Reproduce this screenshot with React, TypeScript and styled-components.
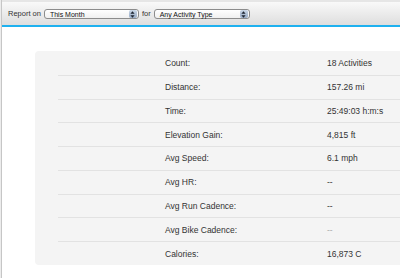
import React from 'react'
import styled, { createGlobalStyle } from 'styled-components'

const GlobalStyle = createGlobalStyle`
    html, body {
        margin: 0;
        padding: 0;
        background: #ececec;
        font-family: "Liberation Sans", Arial, sans-serif;
    }
`

const stats = [
    { label: 'Count:', value: '18 Activities' },
    { label: 'Distance:', value: '157.26 mi' },
    { label: 'Time:', value: '25:49:03 h:m:s' },
    { label: 'Elevation Gain:', value: '4,815 ft' },
    { label: 'Avg Speed:', value: '6.1 mph' },
    { label: 'Avg HR:', value: '--' },
    { label: 'Avg Run Cadence:', value: '--' },
    { label: 'Avg Bike Cadence:', value: '--', faint: true },
    { label: 'Calories:', value: '16,873 C' },
]

const SelectBox = ({ text, width }: { text: string; width: number }) => (
    <Select $width={width}>
        <span>{text}</span>
        <Stepper>
            <svg width="5" height="7" viewBox="0 0 5 7">
                <path d="M2.5 0.3 L4.6 2.8 L0.4 2.8 Z" fill="#1d2430" />
                <path d="M2.5 6.7 L4.6 4.2 L0.4 4.2 Z" fill="#1d2430" />
            </svg>
        </Stepper>
    </Select>
)

const App = () => {
    return (
        <Page>
            <GlobalStyle />
            <Toolbar>
                <ToolLabel>Report on</ToolLabel>
                <SelectBox text="This Month" width={95} />
                <ToolLabel>for</ToolLabel>
                <SelectBox text="Any Activity Type" width={96} />
            </Toolbar>
            <Content>
                <Panel>
                    <Table>
                        {stats.map((s) => (
                            <Row key={s.label}>
                                <Label>{s.label}</Label>
                                <Value $faint={s.faint}>{s.value}</Value>
                            </Row>
                        ))}
                    </Table>
                </Panel>
            </Content>
        </Page>
    )
}

const Page = styled.div`
    margin-left: 1px;
    border-left: 1px solid #c6c6c6;
    background: #fff;
    height: 278px;
    box-sizing: border-box;
`

const Toolbar = styled.div`
    height: 23px;
    border-top: 2px solid #e6e6e6;
    border-bottom: 2px solid #1fb1ef;
    background: linear-gradient(#f9f9f9, #dedede);
    display: flex;
    align-items: center;
    padding-left: 6px;
    gap: 3px;
`

const ToolLabel = styled.span`
    font-size: 7.5px;
    color: #333;
`

const Select = styled.div<{ $width: number }>`
    width: ${(p) => p.$width}px;
    height: 10px;
    box-sizing: border-box;
    border: 1px solid #8c8c8c;
    border-radius: 3px;
    background: linear-gradient(#ffffff, #f0f0f0);
    display: flex;
    align-items: center;
    justify-content: space-between;
    padding: 0 1px 0 5px;
    margin-top: 1px;
    font-size: 7px;
    color: #111;
`

const Stepper = styled.div`
    width: 8px;
    height: 8px;
    border-radius: 2px;
    background: linear-gradient(#c9d6e6, #97aac4);
    display: flex;
    align-items: center;
    justify-content: center;
`

const Content = styled.div`
    padding: 24px 0 0 33px;
`

const Panel = styled.div`
    background: #f4f4f4;
    border-radius: 4px 0 0 4px;
    padding-left: 23px;
    height: 214px;
`

const Table = styled.div`
    display: grid;
    grid-template-rows: repeat(9, 1fr);
    height: 100%;
`

const Row = styled.div`
    display: grid;
    grid-template-columns: 107px 162px 1fr;
    align-items: center;
    font-size: 8.5px;
    color: #333;
    & + & {
        border-top: 1px solid #e2e2e2;
    }
`

const Label = styled.span`
    grid-column: 2;
`

const Value = styled.span<{ $faint?: boolean }>`
    grid-column: 3;
    color: ${(p) => (p.$faint ? '#aaa' : '#333')};
`

export default App
